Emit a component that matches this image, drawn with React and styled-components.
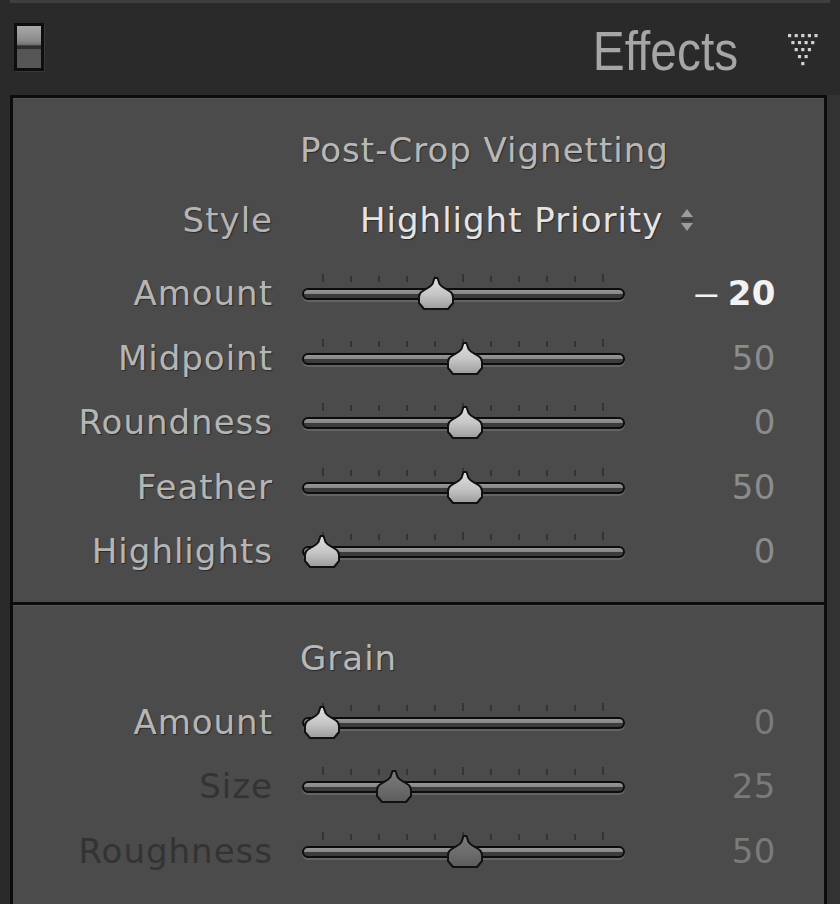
import { createGlobalStyle } from "styled-components";
import styled from "styled-components";

const GlobalStyle = createGlobalStyle`
  html, body {
    margin: 0;
    padding: 0;
    background: #2a2a2a;
  }
  body {
    font-family: "DejaVu Sans", "Noto Sans", sans-serif;
  }
`;

const Screen = styled.div`
  width: 840px;
  height: 904px;
  overflow: hidden;
  background: #2a2a2a;
  display: flex;
  flex-direction: column;
`;

const TopStrip = styled.div`
  height: 3px;
  margin: 0 10px;
  background: #3f3f3f;
`;

const Header = styled.div`
  height: 92px;
  display: flex;
  align-items: center;
  padding: 0 22px 0 14px;
`;

const Toggle = styled.div`
  width: 30px;
  height: 48px;
  box-sizing: border-box;
  border: 3px solid #0e0e0e;
  margin-top: -4px;
  box-shadow: 1px 1px 0 #383838;
  background: linear-gradient(
    to bottom,
    #a9a9a9 0%,
    #8a8a8a 35%,
    #6f6f6f 45%,
    #2f2f2f 47%,
    #2f2f2f 55%,
    #555 56%,
    #575757 100%
  );
`;

const Spacer = styled.div`
  flex: 1;
`;

const PanelName = styled.div`
  font-family: "Liberation Sans", sans-serif;
  font-size: 55px;
  line-height: 1;
  color: #a6a6a6;
  margin-top: 4px;
  transform: scaleX(0.87);
  transform-origin: right center;
`;

const Body = styled.div`
  flex: 1;
  display: flex;
  padding-left: 10px;
`;

const Panel = styled.div`
  flex: 1;
  border: 3px solid #0c0c0c;
  border-bottom: none;
  background: #4b4b4b;
`;

const RightStrip = styled.div`
  width: 13px;
  background: #323232;
`;

const Section = styled.div`
  box-shadow: inset 0 1px 0 #585858;
  padding: ${(p) => p.$top}px 0 ${(p) => p.$bottom}px;
  & + & {
    border-top: 3px solid #0c0c0c;
  }
`;

const SectionTitle = styled.div`
  height: 40px;
  line-height: 40px;
  padding-left: 287px;
  font-size: 34px;
  letter-spacing: 1px;
  color: #b8b8b8;
  text-shadow: 1px 1px 1px #2c2c2c;
`;

const Row = styled.div`
  display: grid;
  grid-template-columns: 289px 323px 151px;
  align-items: center;
  height: ${(p) => p.$h}px;
  margin-top: ${(p) => p.$mt || 0}px;
`;

const Label = styled.div`
  padding-right: 29px;
  text-align: right;
  font-size: 34px;
  letter-spacing: 1px;
  color: ${(p) => (p.$disabled ? "#333" : "#b5b5b5")};
  text-shadow: ${(p) => (p.$disabled ? "none" : "1px 1px 1px #2a2a2a")};
`;

const Value = styled.div`
  text-align: right;
  font-size: 34px;
  letter-spacing: 0.5px;
  font-weight: ${(p) => (p.$active ? 700 : 400)};
  color: ${(p) => (p.$active ? "#f2f2f2" : p.$disabled ? "#7a7a7a" : "#8c8c8c")};
`;

const Dash = styled.span`
  display: inline-block;
  font-weight: 400;
  margin-right: 12px;
  transform: scaleX(1.6);
`;

const Popup = styled.div`
  grid-column: 2 / 4;
  display: flex;
  align-items: center;
  gap: 16px;
  padding-left: 58px;
  font-size: 34px;
  letter-spacing: 1px;
  color: #e4e4e4;
  text-shadow: 1px 1px 1px #2a2a2a;
`;

const SliderBox = styled.div`
  position: relative;
  width: 323px;
  height: 40px;
`;

const Tick = styled.div`
  position: absolute;
  top: ${(p) => (p.$major ? 1 : 3)}px;
  width: 2px;
  height: ${(p) => (p.$major ? 8 : 6)}px;
  background: #343434;
`;

const Track = styled.div`
  position: absolute;
  left: 0;
  right: 0;
  top: 15px;
  height: 12px;
  box-sizing: border-box;
  border: 2px solid #0d0d0d;
  border-radius: 6px;
  background: linear-gradient(to bottom, #969696 0%, #868686 50%, #3c3c3c 56%, #3c3c3c 100%);
  box-shadow: 0 2px 0 #646464;
`;

const Thumb = styled.svg`
  position: absolute;
  top: 3px;
  width: 38px;
  height: 35px;
`;

const TICKS = [21, 49, 77, 105, 133, 161, 189, 217, 245, 273, 301];

function Slider({ pos, disabled, id }) {
  const left = 20 + pos * 286;
  return (
    <SliderBox>
      {TICKS.map((t, i) => (
        <Tick key={t} $major={i === 0 || i === 5 || i === 10} style={{ left: t - 1 }} />
      ))}
      <Track />
      <Thumb viewBox="0 0 38 35" style={{ left: left - 19 }}>
        <defs>
          <linearGradient id={id} x1="0" y1="0" x2="0" y2="1">
            <stop offset="0" stopColor={disabled ? "#7a7a7a" : "#e0e0e0"} />
            <stop offset="0.55" stopColor={disabled ? "#6c6c6c" : "#c4c4c4"} />
            <stop offset="1" stopColor={disabled ? "#5c5c5c" : "#9c9c9c"} />
          </linearGradient>
        </defs>
        <path
          d="M17.5 2 H20.5 L22.5 8 Q24.5 11 29 13 L33 15.5 Q36 17.5 36 21 V27 L31 33 H7 L2 27 V21 Q2 17.5 5 15.5 L9 13 Q13.5 11 15.5 8 Z"
          fill={`url(#${id})`}
          stroke="#111"
          strokeWidth="2"
          strokeLinejoin="round"
        />
      </Thumb>
    </SliderBox>
  );
}

function DotsIcon() {
  const dots = [];
  for (let r = 0; r < 5; r++) {
    for (let c = 0; c < 5 - r; c++) {
      dots.push(
        <rect key={`${r}-${c}`} x={r * 3.3 + c * 6.6} y={r * 7} width="3.2" height="3.2" fill="#d2d2d2" />
      );
    }
  }
  return (
    <svg width="30" height="32" viewBox="0 0 30 32" style={{ marginLeft: 50, marginTop: 2 }}>
      {dots}
    </svg>
  );
}

function UpDown() {
  return (
    <svg width="16" height="26" viewBox="0 0 16 26">
      <path d="M8 2 L14 10 H2 Z" fill="#9c9c9c" />
      <rect x="2" y="12" width="12" height="2" fill="#3a3a3a" />
      <path d="M2 16 H14 L8 24 Z" fill="#9c9c9c" />
    </svg>
  );
}

const vignette = [
  { label: "Amount", value: "20", pos: 0.4, active: true },
  { label: "Midpoint", value: "50", pos: 0.5 },
  { label: "Roundness", value: "0", pos: 0.5 },
  { label: "Feather", value: "50", pos: 0.5 },
  { label: "Highlights", value: "0", pos: 0 },
];

const grain = [
  { label: "Amount", value: "0", pos: 0 },
  { label: "Size", value: "25", pos: 0.25, disabled: true },
  { label: "Roughness", value: "50", pos: 0.5, disabled: true },
];

export default function App() {
  return (
    <Screen>
      <GlobalStyle />
      <TopStrip />
      <Header>
        <Toggle />
        <Spacer />
        <PanelName>Effects</PanelName>
        <DotsIcon />
      </Header>
      <Body>
        <Panel>
          <Section $top={32} $bottom={18}>
            <SectionTitle>Post-Crop Vignetting</SectionTitle>
            <Row $h={60} $mt={20}>
              <Label>Style</Label>
              <Popup>
                Highlight Priority
                <UpDown />
              </Popup>
            </Row>
            {vignette.map((s, i) => (
              <Row key={s.label} $h={64.5} $mt={i === 0 ? 11 : 0}>
                <Label>{s.label}</Label>
                <Slider pos={s.pos} id={`v${i}`} />
                <Value $active={s.active}>
                  {s.active && <Dash>–</Dash>}
                  {s.value}
                </Value>
              </Row>
            ))}
          </Section>
          <Section $top={33} $bottom={20}>
            <SectionTitle>Grain</SectionTitle>
            {grain.map((s, i) => (
              <Row key={s.label} $h={64.5} $mt={i === 0 ? 12 : 0}>
                <Label $disabled={s.disabled}>{s.label}</Label>
                <Slider pos={s.pos} disabled={s.disabled} id={`g${i}`} />
                <Value $disabled>{s.value}</Value>
              </Row>
            ))}
          </Section>
        </Panel>
        <RightStrip />
      </Body>
    </Screen>
  );
}
